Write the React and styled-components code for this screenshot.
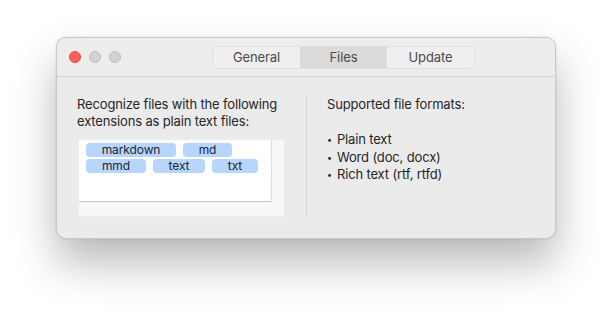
import React from 'react'
import styled, { createGlobalStyle } from 'styled-components'

const Global = createGlobalStyle`
  body {
    margin: 0;
    background: #ffffff;
    font-family: "Inter", "Liberation Sans", sans-serif;
  }
`;

const Page = styled.div`
  width: 612px;
  height: 312px;
  padding-top: 37px;
  box-sizing: border-box;
  display: flex;
  justify-content: center;
`;

const Window = styled.div`
  width: 500px;
  height: 202px;
  background: #ecebeb;
  border-radius: 10px;
  border: 1px solid #c9c8c8;
  box-sizing: border-box;
  box-shadow: 0 24px 44px rgba(0, 0, 0, 0.28), 0 0 2px rgba(0, 0, 0, 0.15);
  display: flex;
  flex-direction: column;
  overflow: hidden;
`;

const TitleBar = styled.div`
  height: 39px;
  flex: none;
  display: flex;
  align-items: center;
  padding-left: 12px;
  background: #eeeded;
  border-bottom: 1px solid #d4d3d3;
  box-sizing: border-box;
`;

const Lights = styled.div`
  display: flex;
  gap: 8px;
`;

const Light = styled.span`
  width: 12px;
  height: 12px;
  border-radius: 50%;
  box-sizing: border-box;
  background: ${p => p.$color};
  border: 1px solid ${p => p.$edge};
`;

const Segmented = styled.div`
  margin-left: 91px;
  display: flex;
  height: 21px;
  border: 1px solid #e0dfdf;
  border-radius: 5px;
  background: #f0efef;
  overflow: hidden;
`;

const Segment = styled.div`
  width: 87px;
  display: flex;
  align-items: center;
  justify-content: center;
  font-size: 13px;
  letter-spacing: -0.1px;
  color: #4a4a4a;
  background: ${p => (p.$active ? '#dcdbdb' : 'transparent')};
`;

const Body = styled.div`
  flex: 1;
  display: flex;
  padding: 19px 0 20px 20px;
`;

const LeftCol = styled.div`
  width: 208px;
  display: flex;
  flex-direction: column;
`;

const Label = styled.div`
  font-size: 13px;
  line-height: 17px;
  letter-spacing: -0.15px;
  color: #262626;
`;

const Field = styled.div`
  margin-top: 9px;
  margin-left: 1px;
  width: 207px;
  height: 78px;
  background: #f8f8f8;
  border: 1px solid #efeeee;
  box-sizing: border-box;
`;

const TokenArea = styled.div`
  width: 193px;
  height: 62px;
  background: #ffffff;
  border-right: 1px solid #dedede;
  border-bottom: 1px solid #c8c8c8;
  box-sizing: border-box;
  padding: 3px 0 0 7px;
  display: flex;
  flex-wrap: wrap;
  align-content: flex-start;
  gap: 2px 7px;
`;

const Token = styled.span`
  width: ${p => p.$w}px;
  height: 14px;
  border-radius: 4px;
  background: #b8d5fb;
  color: #1d2535;
  font-size: 12px;
  line-height: 14px;
  letter-spacing: -0.1px;
  text-align: center;
`;

const Divider = styled.div`
  width: 1px;
  background: #d8d7d7;
  margin: 0 20px 0 21px;
`;

const RightCol = styled.div`
  display: flex;
  flex-direction: column;
`;

const List = styled.ul`
  list-style: none;
  margin: 18px 0 0;
  padding: 0;
`;

const Item = styled.li`
  font-size: 13px;
  line-height: 16.5px;
  letter-spacing: -0.15px;
  color: #262626;
  &::before {
    content: "•";
    font-size: 9px;
    margin-right: 5px;
    vertical-align: 1px;
  }
`;

const tokens = [
  ['markdown', 90],
  ['md', 49],
  ['mmd', 60],
  ['text', 52],
  ['txt', 46],
];

const formats = ['Plain text', 'Word (doc, docx)', 'Rich text (rtf, rtfd)'];

const App = () => (
  <>
    <Global />
    <Page>
      <Window>
        <TitleBar>
          <Lights>
            <Light $color="#fe5f57" $edge="#e24b43" />
            <Light $color="#d3d2d2" $edge="#bdbcbc" />
            <Light $color="#d3d2d2" $edge="#bdbcbc" />
          </Lights>
          <Segmented>
            <Segment>General</Segment>
            <Segment $active>Files</Segment>
            <Segment>Update</Segment>
          </Segmented>
        </TitleBar>
        <Body>
          <LeftCol>
            <Label>
              Recognize files with the following
              <br />
              extensions as plain text files:
            </Label>
            <Field>
              <TokenArea>
                {tokens.map(([t, w]) => (
                  <Token key={t} $w={w}>{t}</Token>
                ))}
              </TokenArea>
            </Field>
          </LeftCol>
          <Divider />
          <RightCol>
            <Label>Supported file formats:</Label>
            <List>
              {formats.map(f => (
                <Item key={f}>{f}</Item>
              ))}
            </List>
          </RightCol>
        </Body>
      </Window>
    </Page>
  </>
)

export default App
